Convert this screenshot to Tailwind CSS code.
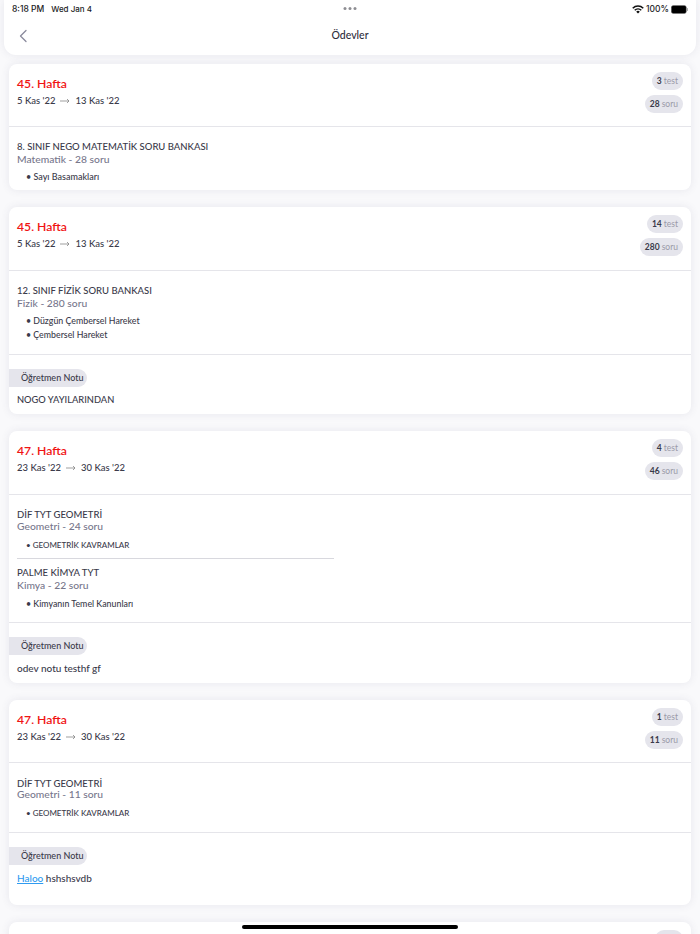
<!DOCTYPE html>
<html lang="tr">
<head>
<meta charset="utf-8">
<script src="https://cdn.jsdelivr.net/npm/@tailwindcss/browser@4"></script>
</head>
<body class="m-0">
<div class="relative w-[700px] h-[934px] overflow-hidden bg-[#f9f9fb] font-['Lato','Noto_Sans',sans-serif] text-[#3a3a4a]">
  <!-- header -->
  <header class="mx-1 h-[55px] bg-white rounded-b-xl shadow-[0_0_9px_rgba(70,70,110,0.10)] relative">
    <div class="absolute inset-x-0 top-0 h-[18px] px-2 flex items-center justify-between text-[8.5px] font-medium text-[#1c1c1e] font-['Inter',sans-serif]">
      <span class="flex items-center gap-[7px]"><span>8:18 PM</span><span class="text-[8px]">Wed Jan 4</span></span>
      <span class="flex items-center gap-[1px]">
        <svg width="12" height="9" viewBox="0 0 12 9"><path d="M6 8.6 4.2 6.7a2.6 2.6 0 0 1 3.6 0ZM3.3 5.8 2.2 4.7a5.4 5.4 0 0 1 7.6 0L8.7 5.8a3.9 3.9 0 0 0-5.4 0ZM1.3 3.8.2 2.7a8.2 8.2 0 0 1 11.6 0l-1.1 1.1a6.7 6.7 0 0 0-9.4 0Z" fill="#111"/></svg>
        <span class="ml-[1px]">100%</span>
        <svg class="ml-[1px]" width="17" height="9" viewBox="0 0 17 9"><rect x=".3" y=".5" width="15" height="8" rx="2" fill="#000" stroke="#777" stroke-width=".5"/><rect x="15.8" y="3" width="1" height="3" rx=".5" fill="#999"/></svg>
      </span>
    </div>
    <div class="absolute left-1/2 -translate-x-1/2 top-[7px] flex items-center gap-[2px]"><span class="size-[3px] rounded-full bg-[#8e8e93]"></span><span class="size-[3px] rounded-full bg-[#8e8e93]"></span><span class="size-[3px] rounded-full bg-[#8e8e93]"></span></div>
    <div class="absolute inset-x-0 top-[18px] h-[36px] flex items-center justify-center text-[10.5px] font-medium text-[#2c2c3a]">Ödevler</div>
    <svg class="absolute left-[14px] top-[29px]" width="10" height="14" viewBox="0 0 10 14" fill="none"><path d="M8 1.5 2.5 7 8 12.5" stroke="#8a8a9c" stroke-width="1.3" stroke-linecap="round" stroke-linejoin="round"/></svg>
  </header>

  <main class="mt-[9px] mx-[9px] flex flex-col">
    <!-- card 1 -->
    <section class="bg-white rounded-lg shadow-[0_0_9px_rgba(70,70,110,0.10)] mb-[17px]">
      <div class="h-[62px] px-2 flex justify-between">
        <div class="pt-[12px]">
          <div class="text-[12.2px] leading-[16px] font-semibold text-[#f01414]">45. Hafta</div>
          <div class="mt-[2px] text-[9.5px] leading-[14px] font-medium flex items-center gap-[5px]"><span>5 Kas '22</span><svg width="10" height="6" viewBox="0 0 10 6" fill="none"><path d="M0 3h9M7 1l2 2-2 2" stroke="#777" stroke-width=".7"/></svg><span>13 Kas '22</span></div>
        </div>
        <div class="pt-2 flex flex-col items-end gap-[5px]">
          <span class="h-[18px] px-[5px] rounded-full bg-[#e5e5ec] flex items-center gap-[2px] text-[8.5px] text-[#9a9aa8]"><b class="font-bold text-[#3a3a4a]">3</b> test</span>
          <span class="h-[18px] px-[5px] rounded-full bg-[#e5e5ec] flex items-center gap-[2px] text-[8.5px] text-[#9a9aa8]"><b class="font-bold text-[#3a3a4a]">28</b> soru</span>
        </div>
      </div>
      <div class="border-t-[1.5px] border-[#e5e5ea] px-2 pt-[14px] h-[64px]">
        <div class="text-[9.5px] leading-[12.5px] font-medium">8. SINIF NEGO MATEMATİK SORU BANKASI</div>
        <div class="-mt-[1px] text-[10.3px] leading-[12.5px] font-medium text-[#77778c]">Matematik - 28 soru</div>
        <div class="mt-[5px] pl-[9px] text-[9px] leading-[14px] font-medium">• Sayı Basamakları</div>
      </div>
    </section>

    <!-- card 2 -->
    <section class="bg-white rounded-lg shadow-[0_0_9px_rgba(70,70,110,0.10)] mb-[17px]">
      <div class="h-[63px] px-2 flex justify-between">
        <div class="pt-[12px]">
          <div class="text-[12.2px] leading-[16px] font-semibold text-[#f01414]">45. Hafta</div>
          <div class="mt-[2px] text-[9.5px] leading-[14px] font-medium flex items-center gap-[5px]"><span>5 Kas '22</span><svg width="10" height="6" viewBox="0 0 10 6" fill="none"><path d="M0 3h9M7 1l2 2-2 2" stroke="#777" stroke-width=".7"/></svg><span>13 Kas '22</span></div>
        </div>
        <div class="pt-2 flex flex-col items-end gap-[5px]">
          <span class="h-[18px] px-[5px] rounded-full bg-[#e5e5ec] flex items-center gap-[2px] text-[8.5px] text-[#9a9aa8]"><b class="font-bold text-[#3a3a4a]">14</b> test</span>
          <span class="h-[18px] px-[5px] rounded-full bg-[#e5e5ec] flex items-center gap-[2px] text-[8.5px] text-[#9a9aa8]"><b class="font-bold text-[#3a3a4a]">280</b> soru</span>
        </div>
      </div>
      <div class="border-t-[1.5px] border-[#e5e5ea] px-2 pt-[14px] h-[84px]">
        <div class="text-[9.5px] leading-[12.5px] font-medium">12. SINIF FİZİK SORU BANKASI</div>
        <div class="-mt-[1px] text-[10.3px] leading-[12.5px] font-medium text-[#77778c]">Fizik - 280 soru</div>
        <div class="mt-[5px] pl-[9px] text-[8.8px] leading-[14px] font-medium">• Düzgün Çembersel Hareket</div>
        <div class="pl-[9px] text-[8.8px] leading-[14px] font-medium">• Çembersel Hareket</div>
      </div>
      <div class="border-t-[1.5px] border-[#e5e5ea] pt-[14px] h-[60px]">
        <span class="flex w-[78px] h-[18px] pl-3 items-center rounded-r-full bg-[#e5e5ec] text-[9px] font-medium">Öğretmen Notu</span>
        <div class="mt-[6px] px-2 text-[9.3px] leading-[14px] font-medium">NOGO YAYILARINDAN</div>
      </div>
    </section>

    <!-- card 3 -->
    <section class="bg-white rounded-lg shadow-[0_0_9px_rgba(70,70,110,0.10)] mb-[17px]">
      <div class="h-[63px] px-2 flex justify-between">
        <div class="pt-[12px]">
          <div class="text-[12.2px] leading-[16px] font-semibold text-[#f01414]">47. Hafta</div>
          <div class="mt-[2px] text-[9.5px] leading-[14px] font-medium flex items-center gap-[5px]"><span>23 Kas '22</span><svg width="10" height="6" viewBox="0 0 10 6" fill="none"><path d="M0 3h9M7 1l2 2-2 2" stroke="#777" stroke-width=".7"/></svg><span>30 Kas '22</span></div>
        </div>
        <div class="pt-2 flex flex-col items-end gap-[5px]">
          <span class="h-[18px] px-[5px] rounded-full bg-[#e5e5ec] flex items-center gap-[2px] text-[8.5px] text-[#9a9aa8]"><b class="font-bold text-[#3a3a4a]">4</b> test</span>
          <span class="h-[18px] px-[5px] rounded-full bg-[#e5e5ec] flex items-center gap-[2px] text-[8.5px] text-[#9a9aa8]"><b class="font-bold text-[#3a3a4a]">46</b> soru</span>
        </div>
      </div>
      <div class="border-t-[1.5px] border-[#e5e5ea] px-2 pt-[14px] h-[128px]">
        <div class="text-[9.5px] leading-[12.5px] font-medium">DİF TYT GEOMETRİ</div>
        <div class="-mt-[2px] text-[10.3px] leading-[12.5px] font-medium text-[#77778c]">Geometri - 24 soru</div>
        <div class="mt-[6px] pl-[9px] text-[8px] leading-[14px] font-medium">• GEOMETRİK KAVRAMLAR</div>
        <div class="mt-[6px] w-[317px] border-t border-[#d8d8de]"></div>
        <div class="mt-[8px] text-[9.5px] leading-[12.5px] font-medium">PALME KİMYA TYT</div>
        <div class="-mt-[1px] text-[10.3px] leading-[12.5px] font-medium text-[#77778c]">Kimya - 22 soru</div>
        <div class="mt-[6px] pl-[9px] text-[8.8px] leading-[14px] font-medium">• Kimyanın Temel Kanunları</div>
      </div>
      <div class="border-t-[1.5px] border-[#e5e5ea] pt-[14px] h-[61px]">
        <span class="flex w-[78px] h-[18px] pl-3 items-center rounded-r-full bg-[#e5e5ec] text-[9px] font-medium">Öğretmen Notu</span>
        <div class="mt-[6px] px-2 text-[10px] leading-[14px] font-medium">odev notu testhf gf</div>
      </div>
    </section>

    <!-- card 4 -->
    <section class="bg-white rounded-lg shadow-[0_0_9px_rgba(70,70,110,0.10)] mb-[17px]">
      <div class="h-[62px] px-2 flex justify-between">
        <div class="pt-[12px]">
          <div class="text-[12.2px] leading-[16px] font-semibold text-[#f01414]">47. Hafta</div>
          <div class="mt-[2px] text-[9.5px] leading-[14px] font-medium flex items-center gap-[5px]"><span>23 Kas '22</span><svg width="10" height="6" viewBox="0 0 10 6" fill="none"><path d="M0 3h9M7 1l2 2-2 2" stroke="#777" stroke-width=".7"/></svg><span>30 Kas '22</span></div>
        </div>
        <div class="pt-2 flex flex-col items-end gap-[5px]">
          <span class="h-[18px] px-[5px] rounded-full bg-[#e5e5ec] flex items-center gap-[2px] text-[8.5px] text-[#9a9aa8]"><b class="font-bold text-[#3a3a4a]">1</b> test</span>
          <span class="h-[18px] px-[5px] rounded-full bg-[#e5e5ec] flex items-center gap-[2px] text-[8.5px] text-[#9a9aa8]"><b class="font-bold text-[#3a3a4a]">11</b> soru</span>
        </div>
      </div>
      <div class="border-t-[1.5px] border-[#e5e5ea] px-2 pt-[15px] h-[70px]">
        <div class="text-[9.5px] leading-[12.5px] font-medium">DİF TYT GEOMETRİ</div>
        <div class="-mt-[3px] text-[10.3px] leading-[12.5px] font-medium text-[#77778c]">Geometri - 11 soru</div>
        <div class="mt-[6px] pl-[9px] text-[8px] leading-[14px] font-medium">• GEOMETRİK KAVRAMLAR</div>
      </div>
      <div class="border-t-[1.5px] border-[#e5e5ea] pt-[14px] h-[73px]">
        <span class="flex w-[78px] h-[18px] pl-3 items-center rounded-r-full bg-[#e5e5ec] text-[9px] font-medium">Öğretmen Notu</span>
        <div class="mt-[6px] px-2 text-[10px] leading-[14px] font-medium"><a class="text-[#2f9bf0] underline">Haloo</a> hshshsvdb</div>
      </div>
    </section>

    <!-- card 5 -->
    <section class="bg-white rounded-lg shadow-[0_0_9px_rgba(70,70,110,0.10)] h-[100px] px-2 pt-2 flex justify-end">
      <span class="h-[18px] w-[28px] rounded-full bg-[#e5e5ec]"></span>
    </section>
  </main>

  <div class="absolute left-[242px] top-[925px] w-[216px] h-[4px] rounded-full bg-black"></div>
</div>
</body>
</html>
